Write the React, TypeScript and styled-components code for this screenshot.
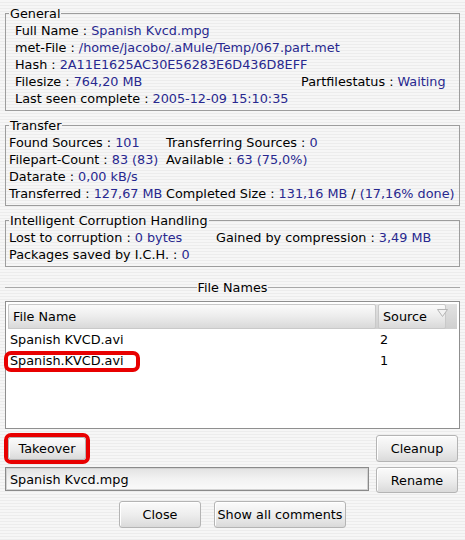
import * as React from 'react'
import styled, { createGlobalStyle } from 'styled-components'

const GlobalStyle = createGlobalStyle`
  html, body {
    margin: 0;
    padding: 0;
  }
  body {
    font-family: 'DejaVu Sans', 'Liberation Sans', sans-serif;
    font-size: 12.8px;
    color: #000;
    background: repeating-linear-gradient(to bottom, #f6f6f6 0, #f6f6f6 2px, #ececec 2px, #ececec 3px);
  }
`

const Dialog = styled.div`
  width: 465px;
  height: 540px;
  box-sizing: border-box;
  padding: 5px 5px 0 5px;
  display: flex;
  flex-direction: column;
  line-height: 17px;
`

const Group = styled.fieldset`
  margin: 0;
  padding: 0 0 3px 0;
  min-width: 0;
  border: 1px solid #9d9d9d;

  & + & {
    margin-top: 6px;
  }
`

const Legend = styled.legend`
  margin-left: 3px;
  padding: 0 1px;
  line-height: 17px;
`

const Body = styled.div<{ $pad: number; $cols?: string }>`
  padding-left: ${p => p.$pad}px;
  display: grid;
  grid-template-columns: ${p => p.$cols || '1fr'};
`

const Wide = styled.div`
  grid-column: 1 / -1;
  white-space: nowrap;
`

const Cell = styled.div`
  white-space: nowrap;
`

const Value = styled.span`
  color: #28288f;
`

const Separator = styled.div`
  margin-top: 12px;
  display: flex;
  align-items: center;
`

const SeparatorLine = styled.div`
  flex: 1;
  height: 1px;
  background: #a8a8a8;
`

const SeparatorLabel = styled.span`
  padding: 0 1px;
`

const List = styled.div`
  margin-top: 5px;
  height: 128px;
  box-sizing: border-box;
  border: 1px solid #8f8f8f;
  background: #fff;
  padding: 2px;
`

const Header = styled.div`
  display: flex;
  gap: 2px;
  height: 25px;
  background: linear-gradient(to bottom, #e2e2e2, #cfcfcf);
`

const HeaderCell = styled.div<{ $w: number }>`
  width: ${p => p.$w}px;
  box-sizing: border-box;
  display: flex;
  align-items: center;
  padding-left: 4px;
  border: 1px solid #c9c9c9;
  border-radius: 2px;
  background: linear-gradient(to bottom, #fbfbfb, #ececec 50%, #d9d9d9);
`

const SortArrow = styled.svg`
  margin-left: auto;
  margin-right: -3px;
  margin-top: -8px;
`

const Row = styled.div`
  display: flex;
  height: 21px;
  line-height: 22px;
`

const RowCell = styled.div<{ $w?: number }>`
  ${p => (p.$w ? `width: ${p.$w}px;` : 'flex: 1;')}
  padding-left: 2px;
  box-sizing: border-box;
  white-space: nowrap;
`

const Marked = styled.span`
  position: relative;

  &::after {
    content: '';
    position: absolute;
    left: -6px;
    right: -16px;
    top: -2px;
    bottom: -4px;
    border: 4px solid #e80000;
    border-radius: 7px;
  }
`

const ButtonRow = styled.div`
  margin-top: 4px;
  display: flex;
  justify-content: space-between;
  align-items: center;
  margin-left: -1px;
  margin-right: 2px;
`

const EditRow = styled.div`
  margin-top: 3px;
  display: flex;
  justify-content: space-between;
  align-items: flex-start;
  margin-right: 2px;
`

const BottomRow = styled.div`
  margin-top: 8px;
  display: flex;
  justify-content: center;
  gap: 13px;
`

const Button = styled.button<{ $w: number; $h?: number }>`
  width: ${p => p.$w}px;
  height: ${p => p.$h || 27}px;
  padding: 0;
  font: inherit;
  color: #000;
  border: 1px solid #b4b4b4;
  border-radius: 3px;
  background: linear-gradient(to bottom, #fbfbfb, #ececec 55%, #dadada);
  box-shadow: inset 1px 1px 0 #fff;
`

const RedFrame = styled.div`
  border: 4px solid #e80000;
  border-radius: 7px;
  display: flex;
`

const NameInput = styled.input`
  width: 364px;
  height: 24px;
  box-sizing: border-box;
  border: 1px solid #8a8a8a;
  box-shadow: inset 0 0 0 1px #d2d2d2;
  background: linear-gradient(to bottom, #e2e2e2, #f2f2f2 50%, #fafafa);
  font: inherit;
  color: #000;
  padding: 0 4px;
  outline: none;
`

const Field = ({ label, value }: { label: string; value: string }) => (
  <>
    {label} : <Value>{value}</Value>
  </>
)

const fileNames = [
  { name: 'Spanish KVCD.avi', source: 2, marked: false },
  { name: 'Spanish.KVCD.avi', source: 1, marked: true },
]

export default function App() {
  return (
    <Dialog>
      <GlobalStyle />
      <Group>
        <Legend>General</Legend>
        <Body $pad={9} $cols="286px auto">
          <Wide><Field label="Full Name" value="Spanish Kvcd.mpg" /></Wide>
          <Wide><Field label="met-File" value="/home/jacobo/.aMule/Temp/067.part.met" /></Wide>
          <Wide><Field label="Hash" value="2A11E1625AC30E56283E6D436D8EFF" /></Wide>
          <Cell><Field label="Filesize" value="764,20 MB" /></Cell>
          <Cell><Field label="Partfilestatus" value="Waiting" /></Cell>
          <Wide><Field label="Last seen complete" value="2005-12-09 15:10:35" /></Wide>
        </Body>
      </Group>
      <Group>
        <Legend>Transfer</Legend>
        <Body $pad={3} $cols="157px auto">
          <Cell><Field label="Found Sources" value="101" /></Cell>
          <Cell><Field label="Transferring Sources" value="0" /></Cell>
          <Cell><Field label="Filepart-Count" value="83 (83)" /></Cell>
          <Cell><Field label="Available" value="63 (75,0%)" /></Cell>
          <Wide><Field label="Datarate" value="0,00 kB/s" /></Wide>
          <Cell><Field label="Transferred" value="127,67 MB" /></Cell>
          <Cell><Field label="Completed Size" value="131,16 MB" /> / <Value>(17,16% done)</Value></Cell>
        </Body>
      </Group>
      <Group>
        <Legend>Intelligent Corruption Handling</Legend>
        <Body $pad={3} $cols="207px auto">
          <Cell><Field label="Lost to corruption" value="0 bytes" /></Cell>
          <Cell><Field label="Gained by compression" value="3,49 MB" /></Cell>
          <Wide><Field label="Packages saved by I.C.H." value="0" /></Wide>
        </Body>
      </Group>

      <Separator>
        <SeparatorLine />
        <SeparatorLabel>File Names</SeparatorLabel>
        <SeparatorLine />
      </Separator>

      <List>
        <Header>
          <HeaderCell $w={368}>File Name</HeaderCell>
          <HeaderCell $w={68}>
            Source
            <SortArrow width="11" height="8" viewBox="0 0 11 8">
              <path d="M0.5 0.5 L10.5 0.5 L5.5 7.5 Z" fill="#f2f2f2" stroke="#b4b4b4" />
            </SortArrow>
          </HeaderCell>
        </Header>
        {fileNames.map(f => (
          <Row key={f.name}>
            <RowCell $w={370}>{f.marked ? <Marked>{f.name}</Marked> : f.name}</RowCell>
            <RowCell>{f.source}</RowCell>
          </Row>
        ))}
      </List>

      <ButtonRow>
        <RedFrame>
          <Button $w={78} $h={23}>Takeover</Button>
        </RedFrame>
        <Button $w={82}>Cleanup</Button>
      </ButtonRow>
      <EditRow>
        <NameInput defaultValue="Spanish Kvcd.mpg" />
        <Button $w={82} $h={26}>Rename</Button>
      </EditRow>
      <BottomRow>
        <Button $w={82}>Close</Button>
        <Button $w={132}>Show all comments</Button>
      </BottomRow>
    </Dialog>
  )
}
